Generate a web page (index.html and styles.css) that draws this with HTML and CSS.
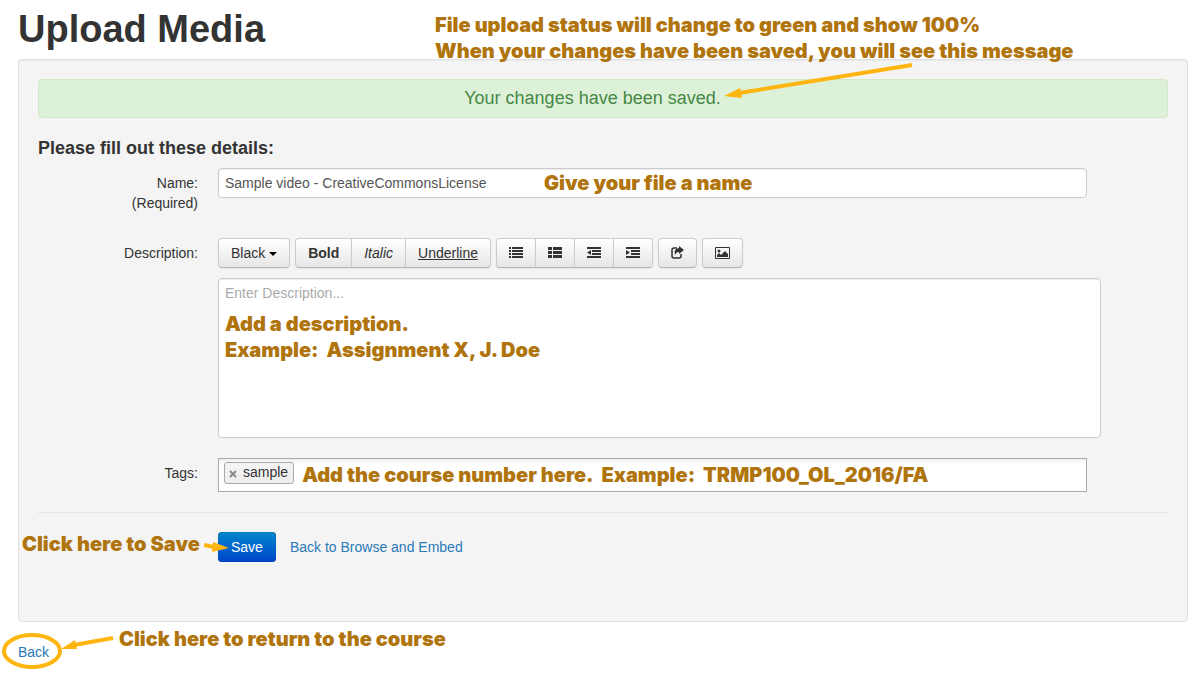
FILE: index.html
```html
<!DOCTYPE html>
<html lang="en">
<head>
<meta charset="utf-8">
<title>Upload Media</title>
<link rel="stylesheet" href="styles.css">
</head>
<body>
<header class="page-header">
  <h1>Upload Media</h1>
  <p class="note note-status">File upload status will change to green and show 100%<br>When your changes have been saved, you will see this message</p>
</header>
<main class="well">
  <div class="alert" role="status">
    <span class="alert-text">Your changes have been saved.<svg class="arrow arrow-alert" width="194" height="38" viewBox="0 0 194 38" aria-hidden="true"><path d="M20 31L193 3" fill="none" stroke="#ffb50f" stroke-width="4"/><path d="M5 34L21 26L23 36Z" fill="#ffb50f"/></svg></span>
  </div>
  <form class="form">
    <h2>Please fill out these details:</h2>
    <div class="row">
      <label class="row-label" for="name">Name:<br>(Required)</label>
      <div class="control short">
        <input class="text-input" id="name" type="text" value="Sample video - CreativeCommonsLicense">
        <span class="note note-name">Give your file a name</span>
      </div>
    </div>
    <div class="row">
      <label class="row-label" for="description">Description:</label>
      <div class="control">
        <div class="toolbar">
          <div class="group"><button type="button" class="btn">Black <span class="caret"></span></button></div>
          <div class="group">
            <button type="button" class="btn bold">Bold</button>
            <button type="button" class="btn italic">Italic</button>
            <button type="button" class="btn underline">Underline</button>
          </div>
          <div class="group">
            <button type="button" class="btn icon-btn" aria-label="Unordered list"><svg width="14" height="14" viewBox="0 0 14 14"><path d="M0 1h2v2H0zM3 1h11v2H3zM0 4h2v2H0zM3 4h11v2H3zM0 7h2v2H0zM3 7h11v2H3zM0 10h2v2H0zM3 10h11v2H3z"/></svg></button>
            <button type="button" class="btn icon-btn" aria-label="Ordered list"><svg width="14" height="14" viewBox="0 0 14 14"><path d="M0 1h4v3H0zM5 1h9v3H5zM0 5h4v3H0zM5 5h9v3H5zM0 9h4v3H0zM5 9h9v3H5z"/></svg></button>
            <button type="button" class="btn icon-btn" aria-label="Outdent"><svg width="14" height="14" viewBox="0 0 14 14"><path d="M0 1h14v2H0zM5 4h9v2H5zM5 7h9v2H5zM0 10h14v2H0zM4 4v5L0 6.500z"/></svg></button>
            <button type="button" class="btn icon-btn" aria-label="Indent"><svg width="14" height="14" viewBox="0 0 14 14"><path d="M0 1h14v2H0zM5 4h9v2H5zM5 7h9v2H5zM0 10h14v2H0zM0 4v5L4 6.500z"/></svg></button>
          </div>
          <div class="group"><button type="button" class="btn icon-btn" aria-label="Insert link"><svg width="13" height="14" viewBox="0 0 13 14"><path d="M6 2H3Q1 2 1 4v6q0 2 2 2h5q2 0 2-2V8" fill="none" stroke="#333" stroke-width="1.500"/><path d="M8 0l5 4-5 4V6Q5 6 4 9 2 3 8 2z"/></svg></button></div>
          <div class="group"><button type="button" class="btn icon-btn" aria-label="Insert image"><svg width="15" height="14" viewBox="0 0 15 14"><path fill-rule="evenodd" d="M1 1h13q1 0 1 1v10q0 1-1 1H1q-1 0-1-1V2q0-1 1-1zM1 2v10h13V2z"/><circle cx="4" cy="5" r="1.500"/><path d="M2 11V9l2-2 2 2 4-4 3 3v3z"/></svg></button></div>
        </div>
        <div class="editor">
          <textarea class="text-area" id="description" placeholder="Enter Description..."></textarea>
          <p class="note note-description">Add a description.<br>Example:&nbsp; Assignment X, J. Doe</p>
        </div>
      </div>
    </div>
    <div class="row">
      <label class="row-label" for="tags">Tags:</label>
      <div class="control short">
        <div class="tags">
          <span class="tag"><button type="button" class="tag-remove" aria-label="Remove sample"><svg width="8" height="8" viewBox="0 0 8 8"><path d="M1 1L7 7M7 1L1 7" fill="none" stroke="#888" stroke-width="2"/></svg></button>sample</span>
          <span class="note">Add the course number here.&nbsp; Example:&nbsp; TRMP100_OL_2016/FA</span>
          <input class="tag-input" id="tags" type="text">
        </div>
      </div>
    </div>
  </form>
  <div class="actions">
    <span class="note note-save">Click here to Save</span>
    <button type="button" class="btn-primary">Save</button>
    <svg class="arrow arrow-save" width="26" height="12" viewBox="0 0 26 12" aria-hidden="true"><path d="M0 4L10 6" fill="none" stroke="#ffb50f" stroke-width="4"/><path d="M9 1L25 7L8 11Z" fill="#ffb50f"/></svg>
    <a class="link" href="#browse">Back to Browse and Embed</a>
  </div>
</main>
<footer class="page-footer">
  <a class="link" href="#back">Back</a>
  <svg class="arrow arrow-back" width="116" height="40" viewBox="0 0 116 40" aria-hidden="true"><ellipse cx="32" cy="20" rx="28" ry="16" fill="none" stroke="#ffb50f" stroke-width="4"/><path d="M74 14L113 7" fill="none" stroke="#ffb50f" stroke-width="4"/><path d="M61 18L75 9L77 18Z" fill="#ffb50f"/></svg>
  <span class="note note-back">Click here to return to the course</span>
</footer>
</body>
</html>
```
FILE: styles.css
```css
* { box-sizing: border-box; }
body {
  margin: 0;
  padding: 9px 15px 0 18px;
  background: #fff;
  color: #333;
  font: 14px/20px "Liberation Sans", Arial, sans-serif;
}
h1 { margin: 0; font-size: 38px; line-height: 40px; }
h2 { margin: 0; font-size: 18px; line-height: 20px; }
button, input, textarea { font: inherit; }
svg { fill: currentColor; }
.note {
  margin: 0;
  color: #b0740c;
  font: 900 20px/26px Inter, "Arial Black", sans-serif;
  white-space: nowrap;
}
.page-header { position: relative; margin-bottom: 10px; }
.note-status { position: absolute; z-index: 1; left: 417px; top: 3px; }
.well {
  padding: 19px 19px 59px;
  background: #f4f4f4;
  border: 1px solid #e0e0e0;
  border-radius: 4px;
  box-shadow: inset 0 1px 1px rgba(0, 0, 0, .05);
}
.alert {
  margin-bottom: 20px;
  padding: 8px 35px 8px 14px;
  background: #ddf0d8;
  border: 1px solid #d3e8c6;
  border-radius: 4px;
  color: #468847;
  font-size: 18px;
  line-height: 21px;
  text-align: center;
}
.alert-text { position: relative; }
.arrow { position: absolute; z-index: 1; }
.arrow-alert { left: calc(100% - 2px); bottom: 8px; }
.form {
  display: flex;
  flex-direction: column;
  gap: 20px;
  padding-bottom: 20px;
  border-bottom: 1px solid #e5e5e5;
}
.form h2 { margin-bottom: -10px; }
.row { display: grid; grid-template-columns: 160px 1fr; gap: 20px; padding-right: 67px; }
.row-label { padding: 5px 0; text-align: right; }
.control { position: relative; min-width: 0; }
.short { margin-right: 14px; }
.text-input, .text-area {
  display: block;
  width: 100%;
  padding: 4px 6px;
  background: #fff;
  border: 1px solid #ccc;
  border-radius: 4px;
  box-shadow: inset 0 1px 1px rgba(0, 0, 0, .075);
  color: #555;
}
.text-input { height: 30px; }
.note-name { position: absolute; left: 326px; top: 2px; }
.toolbar { display: flex; gap: 5px; margin-bottom: 10px; }
.group { display: flex; }
.btn {
  height: 30px;
  padding: 4px 12px;
  background: linear-gradient(#fff, #e6e6e6);
  border: 1px solid #ccc;
  border-bottom-color: #b3b3b3;
  border-radius: 0;
  box-shadow: inset 0 1px 0 #fff, 0 1px 2px rgba(0, 0, 0, .05);
  color: #333;
}
.btn + .btn { margin-left: -1px; }
.btn:first-child { border-radius: 4px 0 0 4px; }
.btn:last-child { border-radius: 0 4px 4px 0; }
.btn:only-child { border-radius: 4px; }
.bold { font-weight: bold; }
.italic { font-style: italic; }
.underline { text-decoration: underline; }
.caret {
  display: inline-block;
  vertical-align: middle;
  border: 4px solid transparent;
  border-top-color: #000;
  border-bottom: 0;
}
.icon-btn { display: flex; align-items: center; }
.editor { position: relative; }
.text-area { height: 160px; resize: none; }
.text-area::placeholder { color: #aaa; }
.note-description { position: absolute; left: 7px; top: 33px; }
.tags {
  display: flex;
  align-items: flex-start;
  gap: 8px;
  height: 34px;
  padding: 3px 5px;
  background: linear-gradient(#eee, #fff 5px);
  border: 1px solid #aaa;
}
.tag {
  display: flex;
  align-items: center;
  gap: 6px;
  height: 22px;
  padding: 0 5px 2px 4px;
  background: linear-gradient(#f4f4f4, #eee);
  border: 1px solid #aaa;
  border-radius: 3px;
}
.tag-remove { display: flex; padding: 3px 0 0; border: 0; background: none; }
.tag-input { flex: 1; min-width: 0; height: 26px; border: 0; background: none; outline: 0; }
.actions {
  position: relative;
  display: flex;
  align-items: center;
  gap: 14px;
  padding: 19px 0 0 180px;
}
.btn-primary {
  height: 30px;
  padding: 4px 13px;
  background: linear-gradient(#08c, #04c);
  border: 0;
  border-radius: 4px;
  box-shadow: inset 0 0 1px #024;
  color: #fff;
}
.link { color: #2a7ab8; text-decoration: none; }
.note-save { position: absolute; left: -16px; top: 18px; }
.arrow-save { left: 166px; top: 28px; }
.page-footer { position: relative; padding: 20px 0 15px; }
.arrow-back { left: -18px; top: 9px; }
.note-back { position: absolute; left: 101px; top: 4px; }
```
